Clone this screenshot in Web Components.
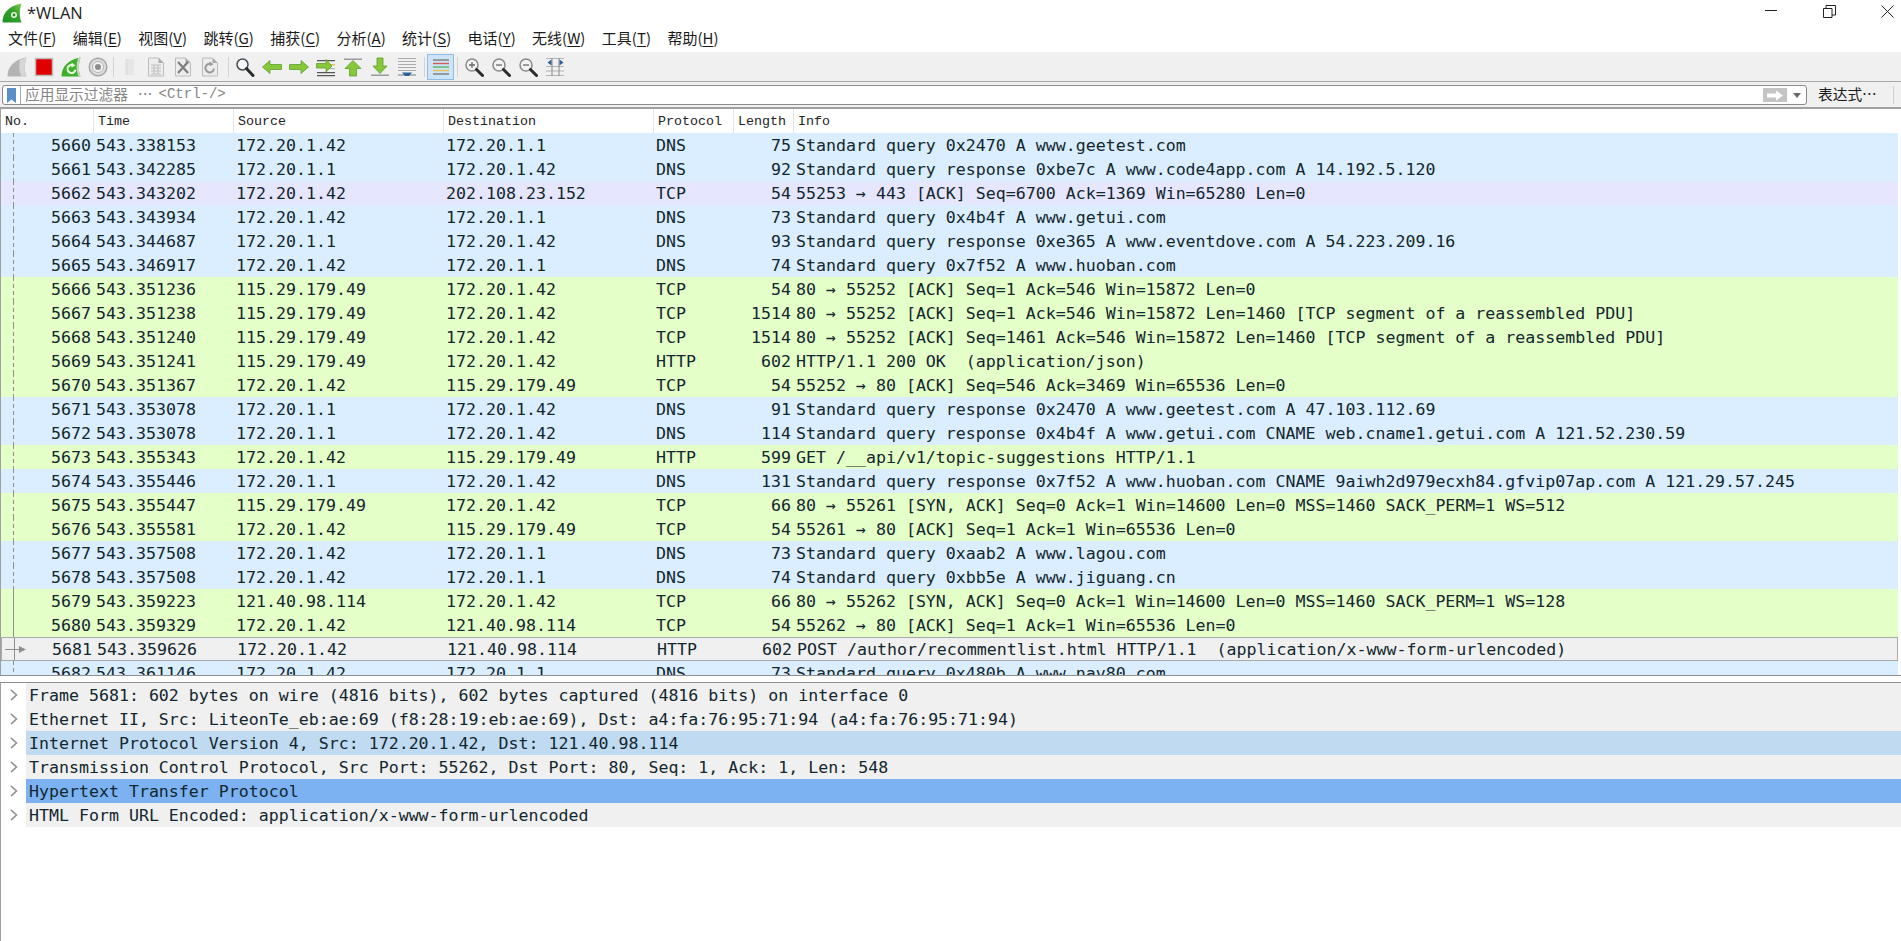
<!DOCTYPE html>
<html lang="zh">
<head>
<meta charset="utf-8">
<title>*WLAN</title>
<style>
  html, body { margin: 0; height: 100%; background: #fff; overflow: hidden; }
  body {
    display: flex;
    flex-direction: column;
    height: 941px;
    font-family: "Noto Sans CJK SC", "Liberation Sans", sans-serif;
    color: #111;
  }
</style>
</head>
<body>
<ws-titlebar title-text="*WLAN"></ws-titlebar>
<ws-menubar></ws-menubar>
<ws-toolbar></ws-toolbar>
<ws-filterbar></ws-filterbar>
<ws-packet-list></ws-packet-list>
<ws-details></ws-details>

<script>
const MONO = '"DejaVu Sans Mono", "Liberation Mono", monospace';
const FIN = 'M.5 19.500C.5 10 7 2.500 19.500.5C17.500 7 17 13 19.500 19.500z';

class WsTitlebar extends HTMLElement {
  connectedCallback() {
    this.attachShadow({ mode: 'open' });
    this.shadowRoot.innerHTML = `
      <style>
        :host { display: flex; align-items: center; height: 25px; flex: none; background: #fff; padding-right: 7px; }
        svg.logo { margin-left: 2px; flex: none; }
        .title { margin-left: 5px; font: 16.500px "Open Sans", "Liberation Sans", sans-serif; color: #222; }
        .controls { margin-left: auto; display: flex; gap: 45px; align-self: flex-start; margin-top: 5px; }
        .controls svg { display: block; }
      </style>
      <svg class="logo" width="20" height="20" viewBox="0 0 20 20">
        <defs><linearGradient id="fin" x1="0" y1="1" x2="1" y2="0">
          <stop offset="0" stop-color="#1f8f25"/><stop offset=".6" stop-color="#35a32c"/><stop offset="1" stop-color="#86cf55"/>
        </linearGradient></defs>
        <path d="${FIN}" fill="url(#fin)"/>
        <circle cx="12" cy="12" r="3" fill="#e6f5de"/>
        <circle cx="12" cy="12" r="1.400" fill="#2f8a1e"/>
      </svg>
      <span class="title">${this.getAttribute('title-text')}</span>
      <div class="controls">
        <svg width="13" height="13" viewBox="0 0 13 13"><path d="M0 5.500h12" stroke="#222" fill="none"/></svg>
        <svg width="13" height="13" viewBox="0 0 13 13"><path d="M.5 3.500h8.500v9H.5zM3 3.500V.5h9.500V10H9" stroke="#222" fill="none"/></svg>
        <svg width="13" height="13" viewBox="0 0 13 13"><path d="M.5.500l12 12M12.500.5l-12 12" stroke="#222" fill="none"/></svg>
      </div>`;
  }
}
customElements.define('ws-titlebar', WsTitlebar);

const MENUS = [
  ['文件', 'F'], ['编辑', 'E'], ['视图', 'V'], ['跳转', 'G'], ['捕获', 'C'], ['分析', 'A'],
  ['统计', 'S'], ['电话', 'Y'], ['无线', 'W'], ['工具', 'T'], ['帮助', 'H']
];

class WsMenubar extends HTMLElement {
  connectedCallback() {
    this.attachShadow({ mode: 'open' });
    const items = MENUS.map(([name, key]) => `<span>${name}(<u>${key}</u>)</span>`).join('');
    this.shadowRoot.innerHTML = `
      <style>
        :host {
          display: flex; align-items: center; gap: 16.400px; height: 25px; padding-bottom: 2px; flex: none;
          padding-left: 8px; background: #fff;
          font: 15px "Noto Sans CJK SC", "Liberation Sans", sans-serif; color: #1a1a1a;
        }
        u { text-underline-offset: 2px; }
      </style>
      ${items}`;
  }
}
customElements.define('ws-menubar', WsMenubar);

// toolbar icons, all drawn in a 20x20 box
const ARROW_GREEN = 'fill="#86c83a" stroke="#5f9e2a" stroke-width=".8"';
const PAGE = '<path d="M2.500 1h10l5 5v13h-15z" fill="#ededed" stroke="#bcbcbc"/><path d="M12.500 1v5h5z" fill="#a8a8a8"/>';
const ICONS = {
  fin: `<path d="${FIN}" fill="#b4b4b4"/><path d="M13 3C11.500 9 12 14.500 14.500 19.500h5C17 13 17.500 7 19.500.5z" fill="#d6d6d6"/>`,
  stop: `<rect x="1.500" y="1.500" width="17" height="17" fill="#e00000" stroke="#bdbdbd" stroke-width="1.500"/>`,
  restart: `<path d="${FIN}" fill="#3fb02c"/><path d="M17 1.500C15 7 15 13 17.500 19.500h2C17 13 17.500 7 19.500.5z" fill="#c9d9c0"/><path d="M14.500 12.500a4 4 0 1 1-2-4" fill="none" stroke="#e9f9e0" stroke-width="2"/><path d="M10.500 5.500l4 3-4 2z" fill="#e9f9e0"/>`,
  gear: `<circle cx="10" cy="10" r="8.800" fill="#dcdcdc" stroke="#a5a5a5" stroke-width="1.400"/><circle cx="10" cy="10" r="5.500" fill="#f2f2f2" stroke="#b5b5b5"/><circle cx="10" cy="10" r="3" fill="#8c8c8c"/>`,
  open: `<rect x="6" y="2" width="9" height="16" fill="#e6e6e6"/><path d="M8 2v16" stroke="#d9d9d9"/>`,
  file: `${PAGE}<path d="M5 8h10M5 11h10M5 14h10M5 17h10M8 8v9M12 8v9" stroke="#bebebe"/>`,
  close: `${PAGE}<path d="M5 5l10 11M15 5L5 16" stroke="#7d7d7d" stroke-width="2.200"/>`,
  reload: `${PAGE}<path d="M14 11.500a4.300 4.300 0 1 1-2-4" fill="none" stroke="#9a9a9a" stroke-width="2"/><path d="M9.500 4.500l4 2.800-3.700 2z" fill="#9a9a9a"/>`,
  find: `<circle cx="7.500" cy="7.500" r="5.500" fill="#f4f9fd" stroke="#4d4d4d" stroke-width="1.500"/><path d="M11.500 11.500l6.500 7" stroke="#2b2b2b" stroke-width="3" stroke-linecap="round"/>`,
  back: `<path d="M.5 10l7.500-6.500v4H19.500v5H8v4z" ${ARROW_GREEN}/>`,
  forward: `<path d="M19.500 10L12 3.500v4H.5v5H12v4z" ${ARROW_GREEN}/>`,
  jump: `<path d="M1 3h18v1.300H1zM1 15h18v1.300H1zM1 18h18v1.300H1z" fill="#555"/><path d="M13 7h6v1.300h-6z" fill="#e6c24d"/><path d="M14 11h5v1.300h-5z" fill="#bbb"/><path d="M.5 6.500H10V2.500l6 6.500-6 6v-4H.5z" ${ARROW_GREEN}/>`,
  top: `<path d="M1 1.500h18V3H1z" fill="#9a9a9a"/><path d="M10 3.500l8 8h-4.500V19h-7v-7.500H2z" ${ARROW_GREEN}/>`,
  bottom: `<path d="M1 17.500h18V19H1z" fill="#9a9a9a"/><path d="M10 16.500l7-7.500h-4V1H7v8H3z" ${ARROW_GREEN}/>`,
  scroll: `<path d="M1 1.500h18M1 4.500h18M1 7.500h18M1 10.500h18M1 13.500h18" stroke="#ababab"/><path d="M1 18h18" stroke="#7d7d7d"/><path d="M5 15.500h10l-3 3.500H8z" fill="#2d5f9a"/>`,
  color: `<path d="M2 3h16" stroke="#7a7a7a" stroke-width="1.400"/><path d="M2 6.500h16" stroke="#d75a5a" stroke-width="1.400"/><path d="M2 10h16" stroke="#59b36a" stroke-width="1.400"/><path d="M2 13.500h16" stroke="#e6c24d" stroke-width="1.400"/><path d="M2 17h16" stroke="#7a7a7a" stroke-width="1.400"/>`,
  zoomin: `<circle cx="8" cy="8" r="6" fill="#f3f3f3" stroke="#8a8a8a" stroke-width="1.500"/><path d="M5 8h6M8 5v6" stroke="#6a6a6a" stroke-width="1.300"/><path d="M12.500 12.500l6 6" stroke="#2b2b2b" stroke-width="3" stroke-linecap="round"/>`,
  zoomout: `<circle cx="8" cy="8" r="6" fill="#f3f3f3" stroke="#8a8a8a" stroke-width="1.500"/><path d="M5 8h6" stroke="#6a6a6a" stroke-width="1.300"/><path d="M12.500 12.500l6 6" stroke="#2b2b2b" stroke-width="3" stroke-linecap="round"/>`,
  resize: `<path d="M1 1.500h18M1 18.500h18M1 9.500h18M1 14h18" stroke="#b5b5b5"/><path d="M7 1v18M14 1v18" stroke="#8a8a8a"/><path d="M2.500 5.500l4-3v6zM18.500 5.500l-4-3v6z" fill="#2d5f9a"/>`
};

class WsTool extends HTMLElement {
  connectedCallback() {
    this.attachShadow({ mode: 'open' });
    this.shadowRoot.innerHTML = `
      <style>
        :host { display: flex; align-items: center; justify-content: center; width: 27px; height: 26px; flex: none; box-sizing: border-box; }
        :host([active]) { background: #cde4f7; border: 1px solid #8fbce3; }
      </style>
      <svg width="20" height="20" viewBox="0 0 20 20">${ICONS[this.getAttribute('icon')]}</svg>`;
  }
}
customElements.define('ws-tool', WsTool);

class WsToolbar extends HTMLElement {
  connectedCallback() {
    this.attachShadow({ mode: 'open' });
    const sep = (left, right) => `<i style="margin:0 ${right}px 0 ${left}px"></i>`;
    const tools = names => names.map(n => `<ws-tool icon="${n}"></ws-tool>`).join('');
    this.shadowRoot.innerHTML = `
      <style>
        :host {
          display: flex; align-items: center; height: 29px; flex: none;
          padding-left: 3px; background: #f0f0f0; border-bottom: 1px solid #a8a8a8;
        }
        i { display: block; width: 1px; height: 20px; background: #d2d2d2; flex: none; }
      </style>
      ${tools(['fin', 'stop', 'restart', 'gear'])}
      ${sep(2, 1)}
      ${tools(['open', 'file', 'close', 'reload'])}
      ${sep(5, 2)}
      ${tools(['find', 'back', 'forward', 'jump', 'top', 'bottom', 'scroll'])}
      ${sep(4, 2)}
      <ws-tool icon="color" active></ws-tool>
      ${sep(3, 2)}
      ${tools(['zoomin', 'zoomout', 'zoomout', 'resize'])}`;
  }
}
customElements.define('ws-toolbar', WsToolbar);

class WsFilterbar extends HTMLElement {
  connectedCallback() {
    this.attachShadow({ mode: 'open' });
    this.shadowRoot.innerHTML = `
      <style>
        :host {
          display: flex; align-items: center; height: 25px; flex: none; box-sizing: border-box;
          padding: 3px 7px 2px 2px; background: #f0f0f0;
          font-family: "Noto Sans CJK SC", "Liberation Sans", sans-serif;
        }
        .box {
          flex: 1; height: 20px; box-sizing: border-box; display: flex; align-items: center;
          background: #fff; border: 1px solid #8a8a8a; border-radius: 3px; padding-right: 5px;
        }
        .mark { width: 18px; height: 18px; flex: none; display: flex; align-items: center; justify-content: center; border-right: 1px solid #a9a9a9; box-sizing: border-box; }
        .hint { margin: -3px 0 0 4px; font-size: 14.700px; color: #858585; white-space: pre; display: flex; align-items: center; }
        .hint .dots { margin-left: 10px; }
        .hint b { margin-left: 6px; font: 14px "Liberation Mono", monospace; color: #858585; }
        .go { margin-left: auto; width: 24px; height: 14px; background: #c4c4c4; display: flex; align-items: center; justify-content: center; }
        .drop { margin-left: 6px; width: 0; height: 0; border: 4px solid transparent; border-top: 5px solid #6a6a6a; border-bottom: 0; }
        .expr { width: 83px; margin-left: 4px; padding-left: 7px; font-size: 14.700px; color: #1a1a1a; box-sizing: border-box; flex: none; white-space: nowrap; }
        .expr span { display: block; margin-top: -3px; }
        .expr { border-right: 1px solid #d0d0d0; }
      </style>
      <div class="box">
        <div class="mark"><svg width="11" height="15" viewBox="0 0 11 15"><path d="M1 0h9v15l-4.500-3.500L1 15z" fill="#5b8fc7"/></svg></div>
        <span class="hint">应用显示过滤器<span class="dots">…</span><b>&lt;Ctrl-/&gt;</b></span>
        <div class="go"><svg width="18" height="11" viewBox="0 0 18 11"><path d="M1 3.500h9V.5l7 5-7 5V7.500H1z" fill="#fff"/></svg></div>
        <div class="drop"></div>
      </div>
      <div class="expr"><span>表达式…</span></div>`;
  }
}
customElements.define('ws-filterbar', WsFilterbar);

const COLS = '93px 140px 210px 210px 80px 60px 1fr';

const BG = { dns: '#daeeff', tcp: '#e4ffc7', http: '#e4ffc7', lilac: '#e7e6ff' };
const A = '172.20.1.42', B = '172.20.1.1', C = '115.29.179.49', D = '121.40.98.114';
const PACKETS = [
  [5660, '338153', A, B, 'DNS', 75, 'Standard query 0x2470 A www.geetest.com'],
  [5661, '342285', B, A, 'DNS', 92, 'Standard query response 0xbe7c A www.code4app.com A 14.192.5.120'],
  [5662, '343202', A, '202.108.23.152', 'TCP', 54, '55253 → 443 [ACK] Seq=6700 Ack=1369 Win=65280 Len=0', 'lilac'],
  [5663, '343934', A, B, 'DNS', 73, 'Standard query 0x4b4f A www.getui.com'],
  [5664, '344687', B, A, 'DNS', 93, 'Standard query response 0xe365 A www.eventdove.com A 54.223.209.16'],
  [5665, '346917', A, B, 'DNS', 74, 'Standard query 0x7f52 A www.huoban.com'],
  [5666, '351236', C, A, 'TCP', 54, '80 → 55252 [ACK] Seq=1 Ack=546 Win=15872 Len=0'],
  [5667, '351238', C, A, 'TCP', 1514, '80 → 55252 [ACK] Seq=1 Ack=546 Win=15872 Len=1460 [TCP segment of a reassembled PDU]'],
  [5668, '351240', C, A, 'TCP', 1514, '80 → 55252 [ACK] Seq=1461 Ack=546 Win=15872 Len=1460 [TCP segment of a reassembled PDU]'],
  [5669, '351241', C, A, 'HTTP', 602, 'HTTP/1.1 200 OK  (application/json)'],
  [5670, '351367', A, C, 'TCP', 54, '55252 → 80 [ACK] Seq=546 Ack=3469 Win=65536 Len=0'],
  [5671, '353078', B, A, 'DNS', 91, 'Standard query response 0x2470 A www.geetest.com A 47.103.112.69'],
  [5672, '353078', B, A, 'DNS', 114, 'Standard query response 0x4b4f A www.getui.com CNAME web.cname1.getui.com A 121.52.230.59'],
  [5673, '355343', A, C, 'HTTP', 599, 'GET /__api/v1/topic-suggestions HTTP/1.1'],
  [5674, '355446', B, A, 'DNS', 131, 'Standard query response 0x7f52 A www.huoban.com CNAME 9aiwh2d979ecxh84.gfvip07ap.com A 121.29.57.245'],
  [5675, '355447', C, A, 'TCP', 66, '80 → 55261 [SYN, ACK] Seq=0 Ack=1 Win=14600 Len=0 MSS=1460 SACK_PERM=1 WS=512'],
  [5676, '355581', A, C, 'TCP', 54, '55261 → 80 [ACK] Seq=1 Ack=1 Win=65536 Len=0'],
  [5677, '357508', A, B, 'DNS', 73, 'Standard query 0xaab2 A www.lagou.com'],
  [5678, '357508', A, B, 'DNS', 74, 'Standard query 0xbb5e A www.jiguang.cn'],
  [5679, '359223', D, A, 'TCP', 66, '80 → 55262 [SYN, ACK] Seq=0 Ack=1 Win=14600 Len=0 MSS=1460 SACK_PERM=1 WS=128', 'conv'],
  [5680, '359329', A, D, 'TCP', 54, '55262 → 80 [ACK] Seq=1 Ack=1 Win=65536 Len=0', 'conv'],
  [5681, '359626', A, D, 'HTTP', 602, 'POST /author/recommentlist.html HTTP/1.1  (application/x-www-form-urlencoded)', 'selected'],
  [5682, '361146', A, B, 'DNS', 73, 'Standard query 0x480b A www.nav80.com']
];

function frameMark(flag) {
  if (flag === 'selected') {
    return '<path d="M12.500 0v24M3 11.500h16" stroke="#8f8f8f" fill="none"/><path d="M17 8l7 3.500-7 3.500z" fill="#8f8f8f"/>';
  }
  if (flag === 'conv') return '<path d="M12.500 0v24" stroke="#8f8f8f" fill="none"/>';
  return '<path d="M12.500 0v24" stroke="#8f8f8f" stroke-dasharray="4 3" fill="none"/>';
}

class WsPacketRow extends HTMLElement {
  set packet(p) {
    const [no, time, src, dst, proto, len, info, flag] = p;
    const selected = flag === 'selected';
    const bg = selected ? '#f0f0f0' : BG[flag === 'lilac' ? flag : proto.toLowerCase()];
    if (selected) this.setAttribute('selected', '');
    this.attachShadow({ mode: 'open' });
    this.shadowRoot.innerHTML = `
      <style>
        :host {
          display: grid; grid-template-columns: ${COLS}; height: 24px; box-sizing: border-box; flex: none;
          margin-right: 3px; background: ${bg}; align-items: start;
          font: 16.600px/26px ${MONO}; color: #12272e; white-space: pre; overflow: hidden;
        }
        :host([selected]) { border: 1px solid #a9a9a9; line-height: 24px; }
        div { padding-left: 2px; overflow: hidden; }
        .no { position: relative; text-align: right; padding: 0 3px 0 0; }
        .len { text-align: right; padding: 0 3px 0 0; }
        .frame { position: absolute; left: 0; top: 0; width: 26px; height: 24px; }
      </style>
      <div class="no"><svg class="frame" viewBox="0 0 26 24">${frameMark(flag)}</svg>${no}</div>
      <div>543.${time}</div><div>${src}</div><div>${dst}</div><div>${proto}</div><div class="len">${len}</div><div>${info}</div>`;
  }
}
customElements.define('ws-packet-row', WsPacketRow);

class WsPacketList extends HTMLElement {
  connectedCallback() {
    this.attachShadow({ mode: 'open' });
    const head = ['No.', 'Time', 'Source', 'Destination', 'Protocol', 'Length', 'Info']
      .map(h => `<span>${h}</span>`).join('');
    this.shadowRoot.innerHTML = `
      <style>
        :host {
          display: flex; flex-direction: column; height: 569px; flex: none; box-sizing: border-box;
          overflow: hidden; background: #fff;
          border-top: 2px solid #a0a0a0; border-left: 1px solid #a0a0a0; border-bottom: 1px solid #8f8f8f;
        }
        .head {
          display: grid; grid-template-columns: ${COLS}; height: 24px; flex: none; align-items: center;
          font: 13.330px "Liberation Mono", monospace; color: #222;
        }
        .head span { padding-left: 4px; height: 24px; line-height: 25px; border-left: 1px solid #e4e4e4; margin-left: -1px; }
        .head span:first-child { border-left: 0; padding-left: 5px; }
      </style>
      <div class="head">${head}</div>`;
    for (const p of PACKETS) {
      const row = document.createElement('ws-packet-row');
      row.packet = p;
      this.shadowRoot.appendChild(row);
    }
  }
}
customElements.define('ws-packet-list', WsPacketList);

class WsDetailRow extends HTMLElement {
  connectedCallback() {
    this.attachShadow({ mode: 'open' });
    this.shadowRoot.innerHTML = `
      <style>
        :host { display: flex; height: 24px; flex: none; font: 16.600px/26px ${MONO}; color: #12272e; white-space: pre; }
        .arrow { width: 25px; flex: none; display: flex; align-items: center; padding-left: 9px; box-sizing: border-box; background: #fff; }
        .text { flex: 1; padding-left: 3px; background: var(--row-bg, #f0f0f0); overflow: hidden; }
        :host([mark="soft"]) { --row-bg: #c0daf2; }
        :host([mark="strong"]) { --row-bg: #7cb2f2; }
      </style>
      <div class="arrow"><svg width="8" height="12" viewBox="0 0 8 12"><path d="M1 1l5.500 5L1 11" fill="none" stroke="#8a8a8a" stroke-width="1.500"/></svg></div>
      <div class="text"><slot></slot></div>`;
  }
}
customElements.define('ws-detail-row', WsDetailRow);

class WsDetails extends HTMLElement {
  connectedCallback() {
    this.attachShadow({ mode: 'open' });
    const lines = [
      ['Frame 5681: 602 bytes on wire (4816 bits), 602 bytes captured (4816 bits) on interface 0'],
      ['Ethernet II, Src: LiteonTe_eb:ae:69 (f8:28:19:eb:ae:69), Dst: a4:fa:76:95:71:94 (a4:fa:76:95:71:94)'],
      ['Internet Protocol Version 4, Src: 172.20.1.42, Dst: 121.40.98.114', 'soft'],
      ['Transmission Control Protocol, Src Port: 55262, Dst Port: 80, Seq: 1, Ack: 1, Len: 548'],
      ['Hypertext Transfer Protocol', 'strong'],
      ['HTML Form URL Encoded: application/x-www-form-urlencoded']
    ];
    this.shadowRoot.innerHTML = `
      <style>
        :host {
          display: flex; flex-direction: column; flex: 1; margin-top: 6px;
          border-top: 1px solid #8f8f8f; border-left: 1px solid #a0a0a0; background: #fff;
        }
      </style>
      ${lines.map(([t, m]) => `<ws-detail-row${m ? ` mark="${m}"` : ''}>${t}</ws-detail-row>`).join('')}`;
  }
}
customElements.define('ws-details', WsDetails);
</script>
</body>
</html>
